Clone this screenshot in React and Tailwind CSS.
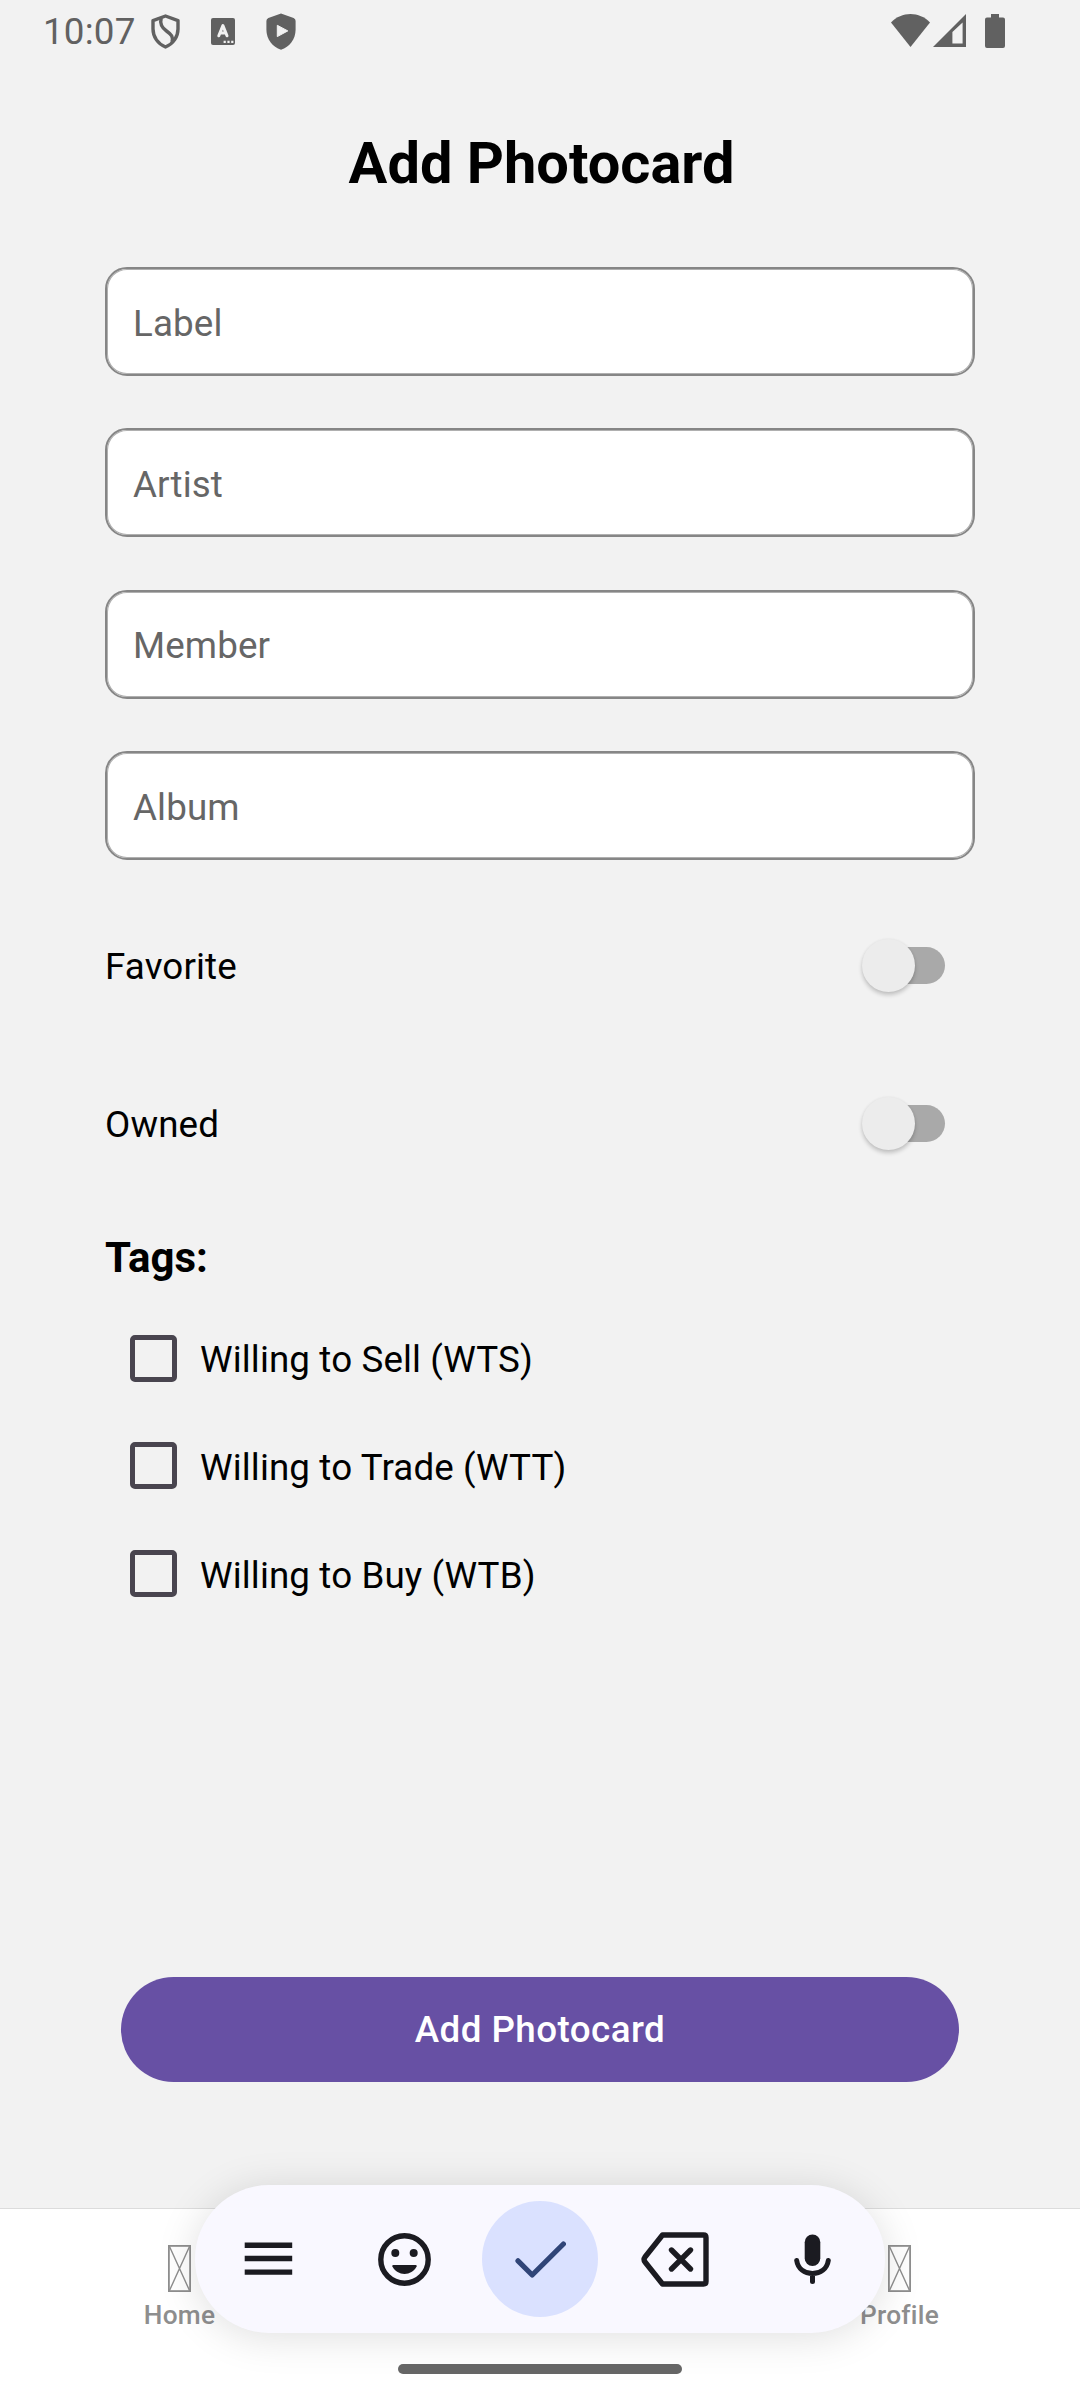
import React from "react";

function StatusBar() {
  return (
    <header className="flex h-[64px] shrink-0 items-start justify-between pl-[43px] pr-[75px] text-[#616161]">
      <div className="flex items-start">
        <span className="mt-[12px] block w-[108px] whitespace-nowrap text-[36.75px] leading-[40px] tracking-[0.2px]">10:07</span>
        <svg className="mt-[13px]" width="29" height="37" viewBox="0 0 29 37" fill="none" stroke="currentColor" strokeWidth="3.4" strokeLinejoin="round">
          <path d="M14.5 3 L27 7.6 V16 C27 24 22 31 14.5 34 C7 31 2 24 2 16 V7.6 Z" />
          <path d="M10.2 5 C8.6 11 10.5 14.5 15.5 18 C20.5 21.5 22.5 24 21 29" />
        </svg>
        <div className="ml-[31px] mt-[18px] h-[27px] w-[24px]">
          <svg width="24" height="27" viewBox="0 0 24 27">
            <rect width="24" height="27" rx="2" fill="currentColor" />
            <path d="M7.8 17.8 L11.9 7.6 L16 17.8 M9.3 15 H14.5" fill="none" stroke="#f2f2f2" strokeWidth="3" strokeLinecap="round" strokeLinejoin="round" />
            <path d="M12.6 22.8h2.2v2.2h-2.2zM16.4 22.8h2.2v2.2h-2.2zM20.2 22.8h2.2v2.2h-2.2z" fill="#f2f2f2" />
          </svg>
        </div>
        <svg className="ml-[31px] mt-[13px]" width="30" height="37" viewBox="0 0 30 37">
          <path d="M15 0.4 L27.6 5 Q29.6 5.8 29.6 8 V16.5 C29.6 26.5 23.5 33.8 15 36.7 C6.5 33.8 0.4 26.5 0.4 16.5 V8 Q0.4 5.8 2.4 5 Z" fill="currentColor" />
          <path d="M11.3 12.3 L21.8 17.9 L11.3 23.6 Z" fill="#f2f2f2" stroke="#f2f2f2" strokeWidth="1" strokeLinejoin="round" />
        </svg>
      </div>
      <div className="mt-[14px] flex items-start">
        <svg width="39" height="33" viewBox="0 0 39 33" fill="currentColor">
          <path d="M0 8.6 C10.5 -2.8 28.5 -2.8 39 8.6 L19.5 33 Z" />
        </svg>
        <svg className="ml-[3px]" width="33" height="33" viewBox="0 0 33 33" fill="currentColor">
          <path fillRule="evenodd" d="M33 0 V33 H0 Z M29.6 8.4 L19.4 18 V29.6 H29.6 Z" />
        </svg>
        <svg className="ml-[19px]" width="20" height="34" viewBox="0 0 20 34" fill="currentColor">
          <path d="M6 0 H14 V3.6 H18 Q20 3.6 20 5.6 V32 Q20 34 18 34 H2 Q0 34 0 32 V5.6 Q0 3.6 2 3.6 H6 Z" />
        </svg>
      </div>
    </header>
  );
}

function Field({ label }) {
  return (
    <div className="flex h-[109px] items-center rounded-[22px] border-2 border-[#868686] bg-white pl-[26px] pt-[4px] text-[36.75px] leading-[44px] tracking-[0.12px] text-[#666666] shadow-[inset_0_0_0_1px_#b0b0b0]">
      {label}
    </div>
  );
}

function ToggleRow({ label }) {
  return (
    <div className="flex h-[54px] items-center justify-between pr-[30px]">
      <span className="pt-[2px] text-[36.75px] leading-[44px] tracking-[0.12px]">{label}</span>
      <div className="flex items-center">
        <div className="z-10 h-[53px] w-[53px] rounded-full bg-[#ececec] shadow-[0_3px_4px_rgba(0,0,0,0.2),0_0_3px_rgba(0,0,0,0.05)]" />
        <div className="-ml-[23px] h-[37px] w-[53px] rounded-r-full bg-[#a9a9a9]" />
      </div>
    </div>
  );
}

function CheckRow({ label }) {
  return (
    <div className="flex h-[47px] items-center gap-[23px] pl-[25px]">
      <div className="h-[47px] w-[47px] rounded-[5px] border-[5px] border-[#49454f]" />
      <span className="whitespace-nowrap pt-[4px] text-[36.75px] leading-[44px] tracking-[0.12px]">{label}</span>
    </div>
  );
}

function Tab({ label }) {
  return (
    <div className="flex w-[359px] flex-col items-center pt-[36px] text-[#8e8e8e]">
      <svg width="23" height="47" viewBox="0 0 23 47" fill="none" stroke="currentColor">
        <rect x="0.9" y="0.9" width="21.2" height="45.2" strokeWidth="1.8" />
        <path d="M1.5 1.5 L21.5 45.5 M21.5 1.5 L1.5 45.5" strokeWidth="1.4" />
      </svg>
      <span className="mt-[7px] text-[26.25px] font-medium leading-[32px] tracking-[0.25px]">{label}</span>
    </div>
  );
}

function KeyboardPill() {
  return (
    <div className="absolute left-[195px] top-[2185px] flex h-[148px] w-[690px] items-center rounded-full bg-[#f9f8ff] text-[#1b1b21] shadow-[0_4px_40px_rgba(0,0,0,0.13)]">
      <svg className="ml-[49px]" width="49" height="34" viewBox="0 0 49 34">
        <path d="M0.7 0.6h47.5v5.4h-47.5zM0.7 13.8h47.5v5.4h-47.5zM0.7 27.4h47.5v5.4h-47.5z" fill="currentColor" />
      </svg>
      <svg className="ml-[85px]" width="53" height="53" viewBox="0 0 53 53">
        <circle cx="26.5" cy="26.5" r="23.7" fill="none" stroke="currentColor" strokeWidth="5.4" />
        <circle cx="17.3" cy="20" r="4" fill="currentColor" />
        <circle cx="35.7" cy="20" r="4" fill="currentColor" />
        <path d="M15.3 32 H37.7 Q39.3 32 38.6 33.6 C36 38.5 31.5 41 26.5 41 C21.5 41 17 38.5 14.4 33.6 Q13.7 32 15.3 32 Z" fill="currentColor" />
      </svg>
      <div className="ml-[51px] flex h-[116px] w-[116px] items-center justify-center rounded-full bg-[#dae1ff]">
        <svg width="52" height="37" viewBox="0 0 52 37" fill="none" stroke="#304578" strokeWidth="5.2" strokeLinecap="round" strokeLinejoin="round">
          <path d="M4 19.8 L18.2 34 L49.4 3" />
        </svg>
      </div>
      <svg className="ml-[43px]" width="68" height="55" viewBox="0 0 68 55" fill="none" stroke="currentColor" strokeWidth="5.4" strokeLinecap="round" strokeLinejoin="round">
        <path d="M21.5 3 H62.5 Q65 3 65 5.5 V49.5 Q65 52 62.5 52 H21.5 L4 30 Q2.2 27.5 4 25 Z" />
        <path d="M30.5 18 L49.5 37 M49.5 18 L30.5 37" />
      </svg>
      <svg className="ml-[85px]" width="38" height="51" viewBox="0 0 38 51">
        <rect x="10.7" y="0.5" width="15.6" height="31.5" rx="7.8" fill="currentColor" />
        <path d="M2.7 26.5 C3.9 34.8 10.5 39.6 18.5 39.6 C26.5 39.6 33.1 34.8 34.3 26.5 M18.5 40 V47.5" fill="none" stroke="currentColor" strokeWidth="5" strokeLinecap="round" />
      </svg>
    </div>
  );
}

export default function App() {
  return (
    <div className="relative flex h-[2400px] w-[1080px] flex-col overflow-hidden bg-[#f2f2f2] font-[Roboto,sans-serif] text-black">
      <StatusBar />
      <main className="flex flex-col px-[105px]">
        <h1 className="mt-[69px] pl-[3px] text-center text-[57.75px] font-bold leading-[60px]">Add Photocard</h1>
        <div className="mt-[74px] flex flex-col gap-[52.4px]">
          <Field label="Label" />
          <Field label="Artist" />
          <Field label="Member" />
          <Field label="Album" />
        </div>
        <div className="mt-[78.7px] flex flex-col gap-[104px]">
          <ToggleRow label="Favorite" />
          <ToggleRow label="Owned" />
        </div>
        <h2 className="mt-[82px] text-[42px] font-bold leading-[50px]">Tags:</h2>
        <div className="mt-[52px] flex flex-col gap-[60.6px]">
          <CheckRow label="Willing to Sell (WTS)" />
          <CheckRow label="Willing to Trade (WTT)" />
          <CheckRow label="Willing to Buy (WTB)" />
        </div>
        <button className="mx-[16px] mt-[379.7px] h-[105px] rounded-full bg-[#6750a4] text-[36.75px] font-medium tracking-[0.45px] text-white">
          Add Photocard
        </button>
      </main>
      <nav className="mt-auto flex h-[192px] shrink-0 justify-between border-t border-[#dcdcdc] bg-white pr-[1px]">
        <Tab label="Home" />
        <Tab label="Profile" />
      </nav>
      <KeyboardPill />
      <div className="absolute left-[398px] top-[2364px] h-[10px] w-[284px] rounded-full bg-[#666666]" />
    </div>
  );
}
